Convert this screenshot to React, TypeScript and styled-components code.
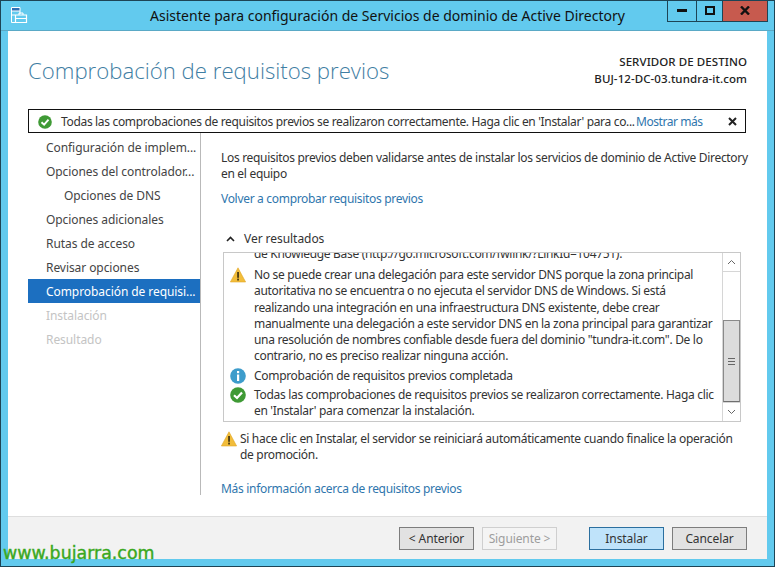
import React from "react";
import styled, { createGlobalStyle } from "styled-components";

const Global = createGlobalStyle`
  html, body { margin: 0; padding: 0; background: #fff; }
  * { box-sizing: border-box; }
`;

const Frame = styled.div`
  position: relative;
  width: 775px;
  height: 567px;
  background: #62caee;
  border: 1px solid #1d4455;
  display: flex;
  flex-direction: column;
  font-family: "Noto Sans", "Open Sans", sans-serif;
  font-size: 12px;
  line-height: 16px;
  letter-spacing: -0.31px;
  color: #333;
  overflow: hidden;
`;

const TitleBar = styled.div`
  position: relative;
  height: 30px;
  flex: none;
  display: flex;
  align-items: center;
  justify-content: center;
  border-bottom: 1px solid #5aa9c6;
`;

const TitleIcon = styled.svg`
  position: absolute;
  left: 9px;
  top: 5px;
`;

const TitleText = styled.div`
  font-size: 14px;
  letter-spacing: 0;
  color: #111;
  white-space: nowrap;
`;

const Controls = styled.div`
  position: absolute;
  right: 6px;
  top: -1px;
  display: flex;
  height: 22px;
  border: 1px solid #1d4455;
  border-top: none;
`;

const Control = styled.div<{ $w: number; $close?: boolean }>`
  width: ${(p) => p.$w}px;
  background: ${(p) => (p.$close ? "#c75a4e" : "transparent")};
  & + & { border-left: 1px solid #1d4455; }
  display: flex;
  align-items: center;
  justify-content: center;
`;

const Window = styled.div`
  flex: 1;
  margin: 0 7px 7px 7px;
  background: #fff;
  display: flex;
  flex-direction: column;
  min-height: 0;
`;

const Header = styled.div`
  height: 78px;
  flex: none;
  display: flex;
  justify-content: space-between;
  padding: 0 20px;
`;

const PageTitle = styled.h1`
  margin: 0;
  padding-top: 23px;
  font-family: "Open Sans", sans-serif;
  font-weight: 300;
  font-size: 22.2px;
  letter-spacing: 0;
  line-height: 34px;
  color: #3f7ea3;
  white-space: nowrap;
`;

const Target = styled.div`
  padding-top: 22px;
  text-align: right;
  font-size: 11.5px;
  line-height: 17px;
  letter-spacing: 0.08px;
  font-weight: 500;
  color: #222;
`;

const Notice = styled.div`
  height: 24px;
  flex: none;
  margin: 0 21px 0 20px;
  border: 1px solid #111;
  display: flex;
  align-items: center;
  padding: 1px 0 0 9px;
  white-space: nowrap;
`;

const NoticeText = styled.span`
  margin-left: 9px;
  width: 575px;
  letter-spacing: -0.33px;
  color: #333;
  flex: none;
`;

const Link = styled.a`
  color: #2f76ad;
  display: block;
  white-space: nowrap;
`;

const NoticeLink = styled(Link)`
  letter-spacing: -0.45px;
`;

const NoticeClose = styled.svg`
  margin-left: 25px;
`;

const Main = styled.div`
  height: 362px;
  flex: none;
  display: flex;
`;

const Sidebar = styled.div`
  width: 193px;
  flex: none;
  padding: 2px 0 0 20px;
  border-right: 1px solid #b9b9b9;
`;

const NavItem = styled.div<{ $indent?: boolean; $active?: boolean; $off?: boolean }>`
  height: 24px;
  width: 172px;
  line-height: 26px;
  letter-spacing: -0.07px;
  padding-left: ${(p) => (p.$indent ? 36 : 18)}px;
  white-space: nowrap;
  background: ${(p) => (p.$active ? "#1c6fc0" : "transparent")};
  color: ${(p) => (p.$active ? "#fff" : p.$off ? "#c4c4c4" : "#444")};
`;

const Content = styled.div`
  flex: 1;
  padding: 17px 0 0 20px;
  min-width: 0;
`;

const Para = styled.div`
  white-space: nowrap;
  color: #333;
`;

const RecheckLink = styled(Link)`
  margin-top: 9px;
`;

const ResultsToggle = styled.div`
  margin: 24px 0 5px 5px;
  height: 16px;
  display: flex;
  align-items: center;
  gap: 9px;
  letter-spacing: -0.05px;
  color: #333;
`;

const ResultsBox = styled.div`
  width: 518px;
  height: 170px;
  margin-left: 2px;
  border: 1px solid #c8c8c8;
  display: flex;
  overflow: hidden;
`;

const ResultsList = styled.div`
  flex: 1;
  min-width: 0;
  padding-left: 6px;
  overflow: hidden;
  line-height: 16.2px;
`;

const ClippedLine = styled.div`
  margin: -7px 0 5px 24px;
  white-space: nowrap;
  color: #333;
`;

const ResultRow = styled.div<{ $gap?: number }>`
  display: flex;
  gap: 8px;
  margin-top: ${(p) => p.$gap ?? 0}px;
  white-space: nowrap;
  color: #333;
`;

const RowIcon = styled.svg`
  flex: none;
`;

const Scrollbar = styled.div`
  width: 18px;
  flex: none;
  display: flex;
  flex-direction: column;
  border-left: 1px solid #d6d6d6;
`;

const ScrollArrow = styled.div`
  height: 18px;
  flex: none;
  display: flex;
  align-items: center;
  justify-content: center;
`;

const ScrollTrack = styled.div`
  flex: 1;
  display: flex;
  flex-direction: column;
  justify-content: flex-end;
  border-top: 1px solid #d6d6d6;
  border-bottom: 1px solid #d6d6d6;
`;

const ScrollThumb = styled.div`
  height: 82px;
  background: #dcdcdc;
  border: 1px solid #8a8a8a;
  border-bottom-color: #6f6f6f;
  display: flex;
  align-items: center;
  justify-content: center;
`;

const Grip = styled.div`
  width: 7px;
  height: 7px;
  border-top: 1px solid #666;
  border-bottom: 1px solid #666;
  background: linear-gradient(#666, #666) center / 100% 1px no-repeat;
`;

const WarnNote = styled.div`
  margin: 9px 0 0 0;
  display: flex;
  gap: 3px;
  white-space: nowrap;
  color: #333;
`;

const MoreLink = styled(Link)`
  margin-top: 18px;
`;

const Footer = styled.div`
  flex: 1;
  margin-top: 21px;
  background: #f2f2f2;
  border-top: 1px solid #dedede;
  display: flex;
  justify-content: flex-end;
  align-items: flex-start;
  padding: 10px 20px 0 0;
`;

const Btn = styled.button<{ $kind?: "default" | "disabled"; $ml?: number }>`
  width: 75px;
  height: 23px;
  margin-left: ${(p) => p.$ml ?? 0}px;
  padding: 0;
  font: inherit;
  letter-spacing: -0.1px;
  border: 1px solid ${(p) => (p.$kind === "default" ? "#2b6f9f" : p.$kind === "disabled" ? "#cfcfcf" : "#7d7d7d")};
  background: ${(p) => (p.$kind === "default" ? "#bfe3fa" : p.$kind === "disabled" ? "#f4f4f4" : "#e2e2e2")};
  color: ${(p) => (p.$kind === "disabled" ? "#9d9d9d" : "#333")};
`;

const Watermark = styled.div`
  position: absolute;
  left: 2px;
  top: 542px;
  font-family: "DejaVu Sans", sans-serif;
  font-size: 17.4px;
  line-height: 20px;
  letter-spacing: 0;
  font-weight: 400;
  -webkit-text-stroke: 0.4px #3aa81e;
  color: #3aa81e;
  white-space: nowrap;
`;

const CheckIcon = ({ size = 16 }: { size?: number }) => (
  <RowIcon width={size} height={size} viewBox="0 0 16 16">
    <circle cx="8" cy="8" r="7.8" fill="#3f9a35" />
    <path d="M4 8.2 L7 11 L12 5.4" fill="none" stroke="#fff" strokeWidth="2.2" />
  </RowIcon>
);

const InfoIcon = () => (
  <RowIcon width="16" height="16" viewBox="0 0 16 16">
    <circle cx="8" cy="8" r="7.8" fill="#3d9ccb" />
    <rect x="7" y="3" width="2.2" height="2.2" fill="#fff" />
    <rect x="7" y="6.5" width="2.2" height="6.5" fill="#fff" />
  </RowIcon>
);

const WarnIcon = () => (
  <RowIcon width="16" height="16" viewBox="0 0 17 16" preserveAspectRatio="none">
    <path d="M8.5 .8 L16.6 15 H.4 Z" fill="#f2bd3a" stroke="#e0a526" strokeWidth=".6" />
    <rect x="7.6" y="5" width="1.9" height="5.8" fill="#4a3a12" />
    <rect x="7.6" y="11.6" width="1.9" height="1.9" fill="#4a3a12" />
  </RowIcon>
);

const steps: { label: string; indent?: boolean; active?: boolean; off?: boolean }[] = [
  { label: "Configuración de implem..." },
  { label: "Opciones del controlador..." },
  { label: "Opciones de DNS", indent: true },
  { label: "Opciones adicionales" },
  { label: "Rutas de acceso" },
  { label: "Revisar opciones" },
  { label: "Comprobación de requisi...", active: true },
  { label: "Instalación", off: true },
  { label: "Resultado", off: true },
];

export default function App() {
  return (
    <Frame>
      <Global />
      <TitleBar>
        <TitleIcon width="18" height="18" viewBox="0 0 18 18">
          <path d="M1.5 1.5 H10 V5 H1.5 Z" fill="#2f6fb5" stroke="#fff" strokeWidth="1" />
          <path d="M1.5 5 V16.5 H5 M1.5 9 H5 M10 5 V8" fill="none" stroke="#fff" strokeWidth="1" />
          <path d="M5.5 9 H16.5 V16.5 H5.5 Z" fill="#62caee" stroke="#fff" strokeWidth="1.2" />
          <path d="M9 9 V7 H13 V9 M5.5 12.5 H16.5" stroke="#fff" strokeWidth="1" fill="none" />
        </TitleIcon>
        <TitleText>Asistente para configuración de Servicios de dominio de Active Directory</TitleText>
        <Controls>
          <Control $w={28}>
            <svg width="10" height="4" viewBox="0 0 10 4"><rect y="0" width="10" height="3" fill="#111" /></svg>
          </Control>
          <Control $w={26}>
            <svg width="10" height="9" viewBox="0 0 10 9"><path d="M1 1 H9 V8 H1 Z" fill="none" stroke="#111" strokeWidth="2" /></svg>
          </Control>
          <Control $w={45} $close>
            <svg width="10" height="9" viewBox="0 0 10 9"><path d="M1 .5 L9 8.5 M9 .5 L1 8.5" stroke="#111" strokeWidth="2.4" /></svg>
          </Control>
        </Controls>
      </TitleBar>
      <Window>
        <Header>
          <PageTitle>Comprobación de requisitos previos</PageTitle>
          <Target>
            SERVIDOR DE DESTINO
            <br />
            BUJ-12-DC-03.tundra-it.com
          </Target>
        </Header>
        <Notice>
          <CheckIcon size={14} />
          <NoticeText>
            Todas las comprobaciones de requisitos previos se realizaron correctamente. Haga clic en 'Instalar' para co...
          </NoticeText>
          <NoticeLink>Mostrar más</NoticeLink>
          <NoticeClose width="9" height="9" viewBox="0 0 9 9">
            <path d="M1 1 L8 8 M8 1 L1 8" stroke="#222" strokeWidth="2" />
          </NoticeClose>
        </Notice>
        <Main>
          <Sidebar>
            {steps.map((s) => (
              <NavItem key={s.label} $indent={s.indent} $active={s.active} $off={s.off}>
                {s.label}
              </NavItem>
            ))}
          </Sidebar>
          <Content>
            <Para>
              Los requisitos previos deben validarse antes de instalar los servicios de dominio de Active Directory
              <br />
              en el equipo
            </Para>
            <RecheckLink>Volver a comprobar requisitos previos</RecheckLink>
            <ResultsToggle>
              <svg width="9" height="6" viewBox="0 0 9 6"><path d="M1 5 L4.5 1.5 L8 5" fill="none" stroke="#222" strokeWidth="1.6" /></svg>
              Ver resultados
            </ResultsToggle>
            <ResultsBox>
              <ResultsList>
                <ClippedLine>de Knowledge Base (http://go.microsoft.com/fwlink/?LinkId=104751).</ClippedLine>
                <ResultRow>
                  <WarnIcon />
                  <div>
                    No se puede crear una delegación para este servidor DNS porque la zona principal
                    <br />
                    autoritativa no se encuentra o no ejecuta el servidor DNS de Windows. Si está
                    <br />
                    realizando una integración en una infraestructura DNS existente, debe crear
                    <br />
                    manualmente una delegación a este servidor DNS en la zona principal para garantizar
                    <br />
                    una resolución de nombres confiable desde fuera del dominio "tundra-it.com". De lo
                    <br />
                    contrario, no es preciso realizar ninguna acción.
                  </div>
                </ResultRow>
                <ResultRow $gap={4}>
                  <InfoIcon />
                  <div>Comprobación de requisitos previos completada</div>
                </ResultRow>
                <ResultRow $gap={2}>
                  <CheckIcon />
                  <div>
                    Todas las comprobaciones de requisitos previos se realizaron correctamente. Haga clic
                    <br />
                    en 'Instalar' para comenzar la instalación.
                  </div>
                </ResultRow>
              </ResultsList>
              <Scrollbar>
                <ScrollArrow>
                  <svg width="9" height="6" viewBox="0 0 9 6"><path d="M1 5 L4.5 1.5 L8 5" fill="none" stroke="#666" strokeWidth="1" /></svg>
                </ScrollArrow>
                <ScrollTrack>
                  <ScrollThumb>
                    <Grip />
                  </ScrollThumb>
                </ScrollTrack>
                <ScrollArrow>
                  <svg width="9" height="6" viewBox="0 0 9 6"><path d="M1 1 L4.5 4.5 L8 1" fill="none" stroke="#666" strokeWidth="1" /></svg>
                </ScrollArrow>
              </Scrollbar>
            </ResultsBox>
            <WarnNote>
              <WarnIcon />
              <div>
                Si hace clic en Instalar, el servidor se reiniciará automáticamente cuando finalice la operación
                <br />
                de promoción.
              </div>
            </WarnNote>
            <MoreLink>Más información acerca de requisitos previos</MoreLink>
          </Content>
        </Main>
        <Footer>
          <Btn>&lt; Anterior</Btn>
          <Btn $kind="disabled" $ml={8}>Siguiente &gt;</Btn>
          <Btn $kind="default" $ml={32}>Instalar</Btn>
          <Btn $ml={8}>Cancelar</Btn>
        </Footer>
      </Window>
      <Watermark>www.bujarra.com</Watermark>
    </Frame>
  );
}
